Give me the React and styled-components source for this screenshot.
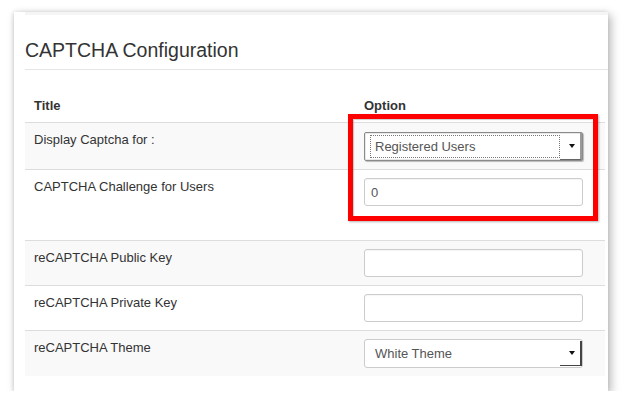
import React from "react";
import styled, { createGlobalStyle } from "styled-components";

const GlobalStyle = createGlobalStyle`
  html, body {
    margin: 0;
    padding: 0;
    background: #fff;
  }

  body {
    font-family: "Liberation Sans", Arial, Helvetica, sans-serif;
    font-size: 13px;
    color: #333;
  }
`;

const Page = styled.div`
  padding: 10px 0 0 14px;
`;

const Card = styled.div`
  position: relative;
  width: 594px;
  height: 379px;
  box-sizing: border-box;
  background: #fff;
  padding: 0 3px 15px 11px;
  box-shadow: 3px 3px 9px rgba(0, 0, 0, 0.28), -1px 0 4px rgba(0, 0, 0, 0.12);
`;

const TopStrip = styled.div`
  height: 3px;
  margin: 2px -3px 0 0;
  background: #f5f5f5;
`;

const Heading = styled.h3`
  margin: 0 -3px 0 0;
  padding: 24px 0 8px;
  font-size: 19.5px;
  font-weight: normal;
  line-height: 22px;
  color: #333;
  border-bottom: 1px solid #e5e5e5;
`;

const Table = styled.table`
  width: 100%;
  margin-top: 19px;
  border-collapse: collapse;
  border-spacing: 0;
`;

const HeadCell = styled.th`
  text-align: left;
  font-weight: bold;
  padding: 8px 9px;
  line-height: 17px;
  border-bottom: 1px solid #ddd;
  width: ${(p) => p.$width || "auto"};
`;

const Row = styled.tr`
  background: ${(p) => (p.$striped ? "#f9f9f9" : "#fff")};
  border-top: 1px solid #ddd;
`;

const Cell = styled.td`
  vertical-align: top;
  padding: 8px 9px ${(p) => (p.$tall ? "34px" : "8px")};
  line-height: 18px;
  color: #333;
`;

const TextInput = styled.input`
  display: block;
  box-sizing: border-box;
  width: 219px;
  height: 28px;
  padding: 0 6px;
  font-family: inherit;
  font-size: 13px;
  color: #555;
  border: 1px solid #ccc;
  border-radius: 3px;
  background: #fff;
  box-shadow: inset 0 1px 1px rgba(0, 0, 0, 0.04);
  outline: none;
`;

const SelectBox = styled.div`
  display: flex;
  align-items: stretch;
  box-sizing: border-box;
  width: 219px;
  height: 29px;
  margin-top: ${(p) => (p.$focused ? "1px" : "0")};
  border: 1px solid ${(p) => (p.$focused ? "#8a8a8a" : "#ccc")};
  border-radius: ${(p) => (p.$focused ? "2px" : "3px")};
  background: #fff;
  color: #555;
  box-shadow: ${(p) =>
    p.$focused ? "inset 0 0 0 1px #e8e8e8, 1px 1px 1px rgba(0,0,0,0.25)" : "none"};
`;

const SelectValue = styled.div`
  flex: 1;
  display: flex;
  align-items: center;
  margin: ${(p) => (p.$focused ? "2px 0 2px 5px" : "0 0 0 10px")};
  padding-left: ${(p) => (p.$focused ? "4px" : "0")};
  border: ${(p) => (p.$focused ? "1px dotted #777" : "none")};
`;

const SelectArrow = styled.div`
  width: 17px;
  display: flex;
  align-items: center;
  justify-content: center;
  border-right: 2px solid ${(p) => (p.$focused ? "#9a9a9a" : "#444")};
  border-bottom: 1px solid ${(p) => (p.$focused ? "#666" : "#444")};
  margin: ${(p) => (p.$focused ? "0" : "1px 0 1px 0")};
  padding-left: 3px;
`;

const Caret = styled.span`
  width: 0;
  height: 0;
  border-left: 3px solid transparent;
  border-right: 3px solid transparent;
  border-top: 4px solid #111;
`;

const Highlight = styled.div`
  position: absolute;
  left: 334px;
  top: 102px;
  width: 250px;
  height: 107px;
  box-sizing: border-box;
  border: 5px solid #ff0000;
  box-shadow: 1px 1px 2px rgba(0, 0, 0, 0.3), inset 1px 1px 1px rgba(0, 0, 0, 0.2);
  pointer-events: none;
`;

const Select = ({ value, focused }) => (
  <SelectBox $focused={focused}>
    <SelectValue $focused={focused}>{value}</SelectValue>
    <SelectArrow $focused={focused}>
      <Caret />
    </SelectArrow>
  </SelectBox>
);

const rows = [
  { title: "Display Captcha for :", type: "select", value: "Registered Users", focused: true },
  { title: "CAPTCHA Challenge for Users", type: "input", value: "0", tall: true },
  { title: "reCAPTCHA Public Key", type: "input", value: "" },
  { title: "reCAPTCHA Private Key", type: "input", value: "" },
  { title: "reCAPTCHA Theme", type: "select", value: "White Theme" },
];

const App = () => (
  <>
    <GlobalStyle />
    <Page>
      <Card>
        <TopStrip />
        <Heading>CAPTCHA Configuration</Heading>
        <Table>
          <thead>
            <tr>
              <HeadCell $width="312px">Title</HeadCell>
              <HeadCell>Option</HeadCell>
            </tr>
          </thead>
          <tbody>
            {rows.map((row, i) => (
              <Row key={row.title} $striped={i % 2 === 0}>
                <Cell $tall={row.tall}>{row.title}</Cell>
                <Cell $tall={row.tall}>
                  {row.type === "select" ? (
                    <Select value={row.value} focused={row.focused} />
                  ) : (
                    <TextInput type="text" defaultValue={row.value} />
                  )}
                </Cell>
              </Row>
            ))}
          </tbody>
        </Table>
        <Highlight />
      </Card>
    </Page>
  </>
);

export default App;
